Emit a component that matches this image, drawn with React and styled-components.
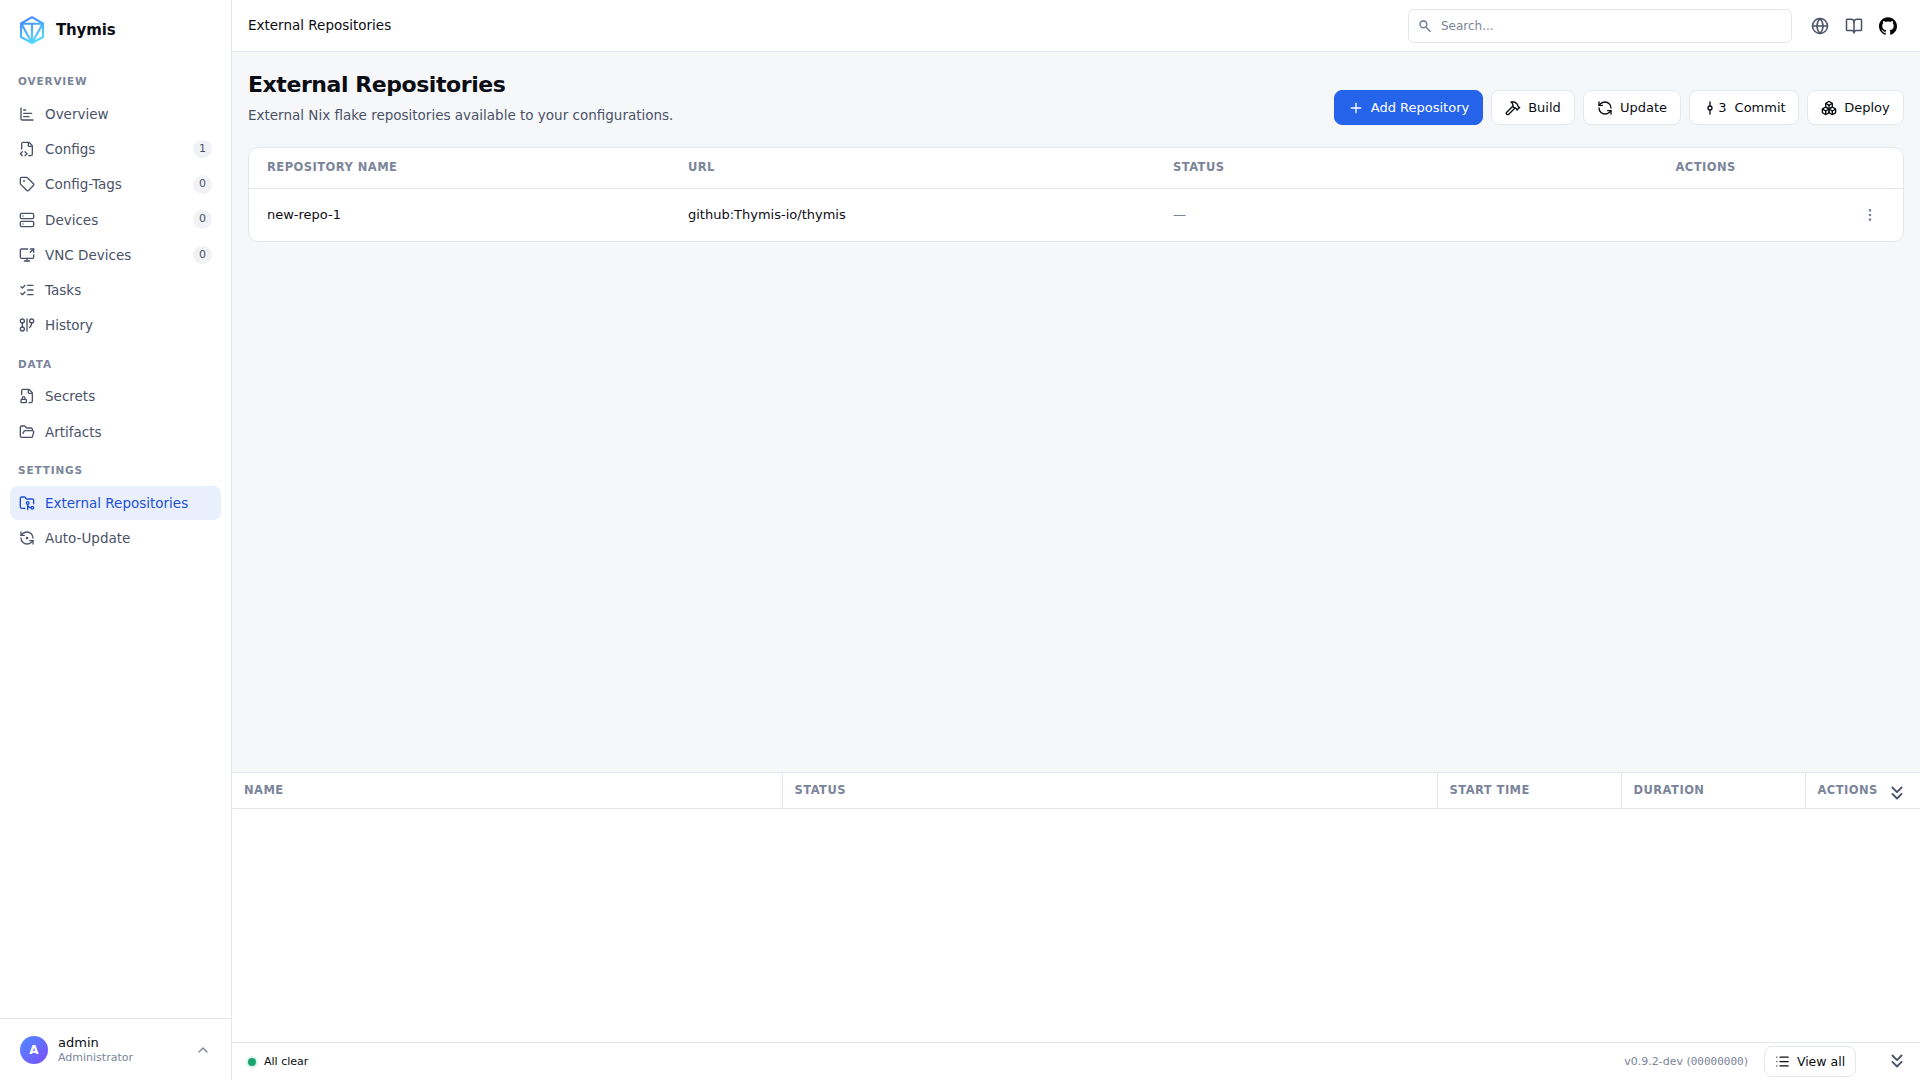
import React from 'react';
import styled, { createGlobalStyle } from 'styled-components';
import {
  ChartBar, FileCode2, Tag, Server, ScreenShare, ListChecks, GitGraph, FileLock2, FolderOpen,
  FolderGit2, RefreshCcwDot, Plus, Hammer, RefreshCcw, GitCommitVertical, Boxes, List, ChevronsDown,
  ChevronUp, Globe, BookOpen, EllipsisVertical,
} from 'lucide-react';

const Global = createGlobalStyle`
  *, *::before, *::after { box-sizing: border-box; }
  body { margin: 0; font-family: "DejaVu Sans", sans-serif; color: #0b0d14; background: #f5f7f9; }
  button { font-family: inherit; color: inherit; }
`;
const line = '#e4e7ee';
const muted = '#7b859a';
const slate = '#4a5268';

const Shell = styled.div`display: grid; grid-template-columns: 232px 1fr; width: 1920px; height: 1080px;`;
const Sidebar = styled.aside`background: #fff; border-right: 1px solid ${line}; display: flex; flex-direction: column; min-height: 0;`;
const Brand = styled.div`display: flex; align-items: center; gap: 10px; height: 58px; padding: 2px 18px 0; font-weight: 700; font-size: 15px; letter-spacing: -0.15px;`;
const Nav = styled.nav`flex: 1; padding: 0 10px; display: flex; flex-direction: column;`;
const Heading = styled.div`font-size: 10.5px; line-height: 16px; font-weight: 700; letter-spacing: 0.84px; color: ${muted}; padding-left: 8px; margin: ${(p) => p.$top}px 0 7.75px;`;
const Item = styled.a`
  display: flex; align-items: center; gap: 10px; height: 34.25px; margin-bottom: 1px; padding: 0 9px; border-radius: 8px;
  font-size: 13.5px; line-height: 20.25px; color: ${(p) => (p.$active ? '#1d4fd8' : slate)}; background: ${(p) => (p.$active ? '#e9effd' : 'transparent')};
  svg { width: 16px; height: 16px; flex: none; }
`;
const Count = styled.span`margin-left: auto; min-width: 19px; height: 18.5px; border-radius: 10px; background: #f1f2f6; font-size: 11px; line-height: 17px; text-align: center;`;
const User = styled.div`height: 62px; border-top: 1px solid ${line}; display: flex; align-items: center; gap: 10px; padding: 1px 20px 0; svg { margin-left: auto; color: ${muted}; }`;
const Avatar = styled.div`width: 28px; height: 28px; border-radius: 50%; background: linear-gradient(135deg, #4f8cff, #7c4dff); color: #fff; font-size: 12px; font-weight: 700; display: grid; place-items: center;`;
const UserName = styled.div`font-size: 13px; line-height: 15px; padding-bottom: 1px;`;
const UserRole = styled.div`font-size: 11px; line-height: 14px; color: ${muted};`;

const Main = styled.main`display: flex; flex-direction: column; min-width: 0;`;
const TopBar = styled.header`height: 52px; background: #fff; border-bottom: 1px solid ${line}; display: flex; align-items: center; padding: 0 23px 0 16px; font-size: 13.5px;`;
const Crumb = styled.span`flex: 1; padding-bottom: 1px;`;
const Search = styled.div`width: 384px; height: 34px; border: 1px solid ${line}; border-radius: 6px; display: flex; align-items: center; gap: 9px; padding: 0 9px; font-size: 12px; color: ${muted};`;
const TopIcons = styled.div`display: flex; gap: 16px; margin-left: 19px; color: ${slate}; svg { display: block; width: 18px; height: 18px; }`;

const Content = styled.section`flex: 1; padding: 16px 16px 0;`;
const PageHead = styled.div`display: flex; justify-content: space-between; height: 79px;`;
const Title = styled.h1`margin: 0; font-size: 22px; line-height: 33px; letter-spacing: -0.44px; font-weight: 700;`;
const Sub = styled.p`margin: 4px 0 0; font-size: 13.5px; line-height: 20px; color: ${slate};`;
const Actions = styled.div`display: flex; gap: 8px; padding-top: 22px;`;
const Button = styled.button`
  display: flex; align-items: center; justify-content: center; gap: ${(p) => p.$gap ?? 7}px; width: ${(p) => p.$w}px; height: ${(p) => p.$h ?? 35}px; padding: 0 0 ${(p) => p.$lift ?? 0}px;
  font-size: ${(p) => p.$size ?? 13}px; border-radius: 8px; white-space: nowrap;
  border: 1px solid ${(p) => (p.$primary ? '#2563eb' : line)}; background: ${(p) => (p.$primary ? '#2563eb' : '#fff')}; color: ${(p) => (p.$primary ? '#fff' : '#0b0d14')};
  svg { width: ${(p) => p.$icon ?? 16}px; height: ${(p) => p.$icon ?? 16}px; flex: none; }
`;
const CommitCount = styled.span`display: flex; align-items: center; margin-right: 1px;`;

const Card = styled.div`background: #fff; border: 1px solid ${line}; border-radius: 10px; overflow: hidden;`;
const RepoRow = styled.div`
  display: grid; grid-template-columns: 421px 485px 502.5px 1fr; align-items: center; padding: 0 0 1px 18px;
  height: ${(p) => (p.$head ? 41 : 52)}px; font-size: ${(p) => (p.$head ? 11.5 : 13)}px;
  ${(p) => p.$head && `font-weight: 700; letter-spacing: 0.46px; color: ${muted}; border-bottom: 1px solid ${line}; padding-bottom: 3px;`}
`;
const Dash = styled.span`color: ${muted};`;
const RowMenu = styled.span`justify-self: end; margin-right: 25px; padding-top: 1px; color: ${muted}; svg { display: block; }`;

const Tasks = styled.section`height: 270px; background: #fff; border-top: 1px solid ${line};`;
const TaskHead = styled.div`display: grid; grid-template-columns: 550px 655px 184px 184px 1fr; height: 36px; border-bottom: 1px solid ${line};`;
const TaskCell = styled.div`
  display: flex; align-items: center; justify-content: space-between; padding: 0 12px 1px 12px; font-size: 11.5px; font-weight: 700; letter-spacing: 0.46px; color: ${muted};
  & + & { border-left: 1px solid ${line}; padding-left: 11.5px; }
  svg { color: ${slate}; position: relative; top: 3px; }
`;
const Footer = styled.footer`height: 38px; background: #fff; border-top: 1px solid ${line}; display: flex; align-items: center; padding: 0 12px 0 16px; font-size: 11px;`;
const Dot = styled.i`width: 8px; height: 8px; border-radius: 50%; background: #18a46f; box-shadow: 0 0 0 2px #dcf3ea; margin-right: 8px;`;
const Version = styled.span`margin-left: auto; margin-right: 16px; padding-bottom: 1px; color: ${muted}; code { font-family: "DejaVu Sans Mono", monospace; font-size: 11px; }`;
const FootToggle = styled.span`margin-left: 30px; padding-bottom: 2px; color: ${slate}; svg { display: block; }`;

const Logo = () => (
  <svg width="28" height="28" viewBox="0 0 28 28" fill="none" stroke="url(#lg)" strokeWidth="2.1" strokeLinejoin="round">
    <defs><linearGradient id="lg" x1="6" y1="2" x2="18" y2="27" gradientUnits="userSpaceOnUse"><stop stopColor="#4285ff" /><stop offset="1" stopColor="#55dcff" /></linearGradient></defs>
    <path d="M14 1.200 25 7.500v13.500L14 27 3 21V7.500zM3 7.700h22M14 7.700V27M3.800 8.500 14 27 24.200 8.500" />
  </svg>
);
const GitHub = () => (
  <svg viewBox="0 0 24 24" fill="#000"><path d="M12 .297c-6.630 0-12 5.373-12 12 0 5.303 3.438 9.800 8.205 11.385.6.113.82-.258.82-.577 0-.285-.010-1.040-.015-2.040-3.338.724-4.042-1.610-4.042-1.610C4.422 18.070 3.633 17.700 3.633 17.700c-1.087-.744.084-.729.084-.729 1.205.084 1.838 1.236 1.838 1.236 1.070 1.835 2.809 1.305 3.495.998.108-.776.417-1.305.760-1.605-2.665-.300-5.466-1.332-5.466-5.930 0-1.310.465-2.380 1.235-3.220-.135-.303-.540-1.523.105-3.176 0 0 1.005-.322 3.300 1.230.960-.267 1.980-.399 3-.405 1.020.006 2.040.138 3 .405 2.280-1.552 3.285-1.230 3.285-1.230.645 1.653.240 2.873.120 3.176.765.840 1.230 1.910 1.230 3.220 0 4.610-2.805 5.625-5.475 5.920.420.360.810 1.096.810 2.220 0 1.606-.015 2.896-.015 3.286 0 .315.210.690.825.570C20.565 22.092 24 17.592 24 12.297c0-6.627-5.373-12-12-12" /></svg>
);
const SearchIcon = () => (
  <svg width="14" height="14" viewBox="0 0 14 14" fill="none" stroke="currentColor" strokeWidth="1.600" strokeLinecap="round"><circle cx="5.400" cy="5.300" r="3.400" /><path d="m8 8 4 4.200" /></svg>
);

const NAV = [
  { title: 'OVERVIEW', top: 15, items: [['Overview', ChartBar], ['Configs', FileCode2, 1], ['Config-Tags', Tag, 0], ['Devices', Server, 0], ['VNC Devices', ScreenShare, 0], ['Tasks', ListChecks], ['History', GitGraph]] },
  { title: 'DATA', top: 12, items: [['Secrets', FileLock2], ['Artifacts', FolderOpen]] },
  { title: 'SETTINGS', top: 12.25, items: [['External Repositories', FolderGit2], ['Auto-Update', RefreshCcwDot]] },
];

export default function App() {
  return (
    <Shell>
      <Global />
      <Sidebar>
        <Brand><Logo />Thymis</Brand>
        <Nav>
          {NAV.map((g) => (
            <React.Fragment key={g.title}>
              <Heading $top={g.top}>{g.title}</Heading>
              {g.items.map(([label, Icon, n]) => (
                <Item key={label} $active={label === 'External Repositories'}><Icon />{label}{n !== undefined && <Count>{n}</Count>}</Item>
              ))}
            </React.Fragment>
          ))}
        </Nav>
        <User><Avatar>A</Avatar><div><UserName>admin</UserName><UserRole>Administrator</UserRole></div><ChevronUp size={16} /></User>
      </Sidebar>
      <Main>
        <TopBar>
          <Crumb>External Repositories</Crumb>
          <Search><SearchIcon />Search...</Search>
          <TopIcons><Globe /><BookOpen /><GitHub /></TopIcons>
        </TopBar>
        <Content>
          <PageHead>
            <div><Title>External Repositories</Title><Sub>External Nix flake repositories available to your configurations.</Sub></div>
            <Actions>
              <Button $primary $w={149}><Plus />Add Repository</Button>
              <Button $w={84}><Hammer />Build</Button>
              <Button $w={98}><RefreshCcw />Update</Button>
              <Button $w={110}><CommitCount><GitCommitVertical />3</CommitCount>Commit</Button>
              <Button $w={97}><Boxes />Deploy</Button>
            </Actions>
          </PageHead>
          <Card>
            <RepoRow $head><span>REPOSITORY NAME</span><span>URL</span><span>STATUS</span><span>ACTIONS</span></RepoRow>
            <RepoRow><span>new-repo-1</span><span>github:Thymis-io/thymis</span><Dash>—</Dash><RowMenu><EllipsisVertical size={16} /></RowMenu></RepoRow>
          </Card>
        </Content>
        <Tasks>
          <TaskHead>
            <TaskCell>NAME</TaskCell><TaskCell>STATUS</TaskCell><TaskCell>START TIME</TaskCell><TaskCell>DURATION</TaskCell><TaskCell>ACTIONS<ChevronsDown size={22} /></TaskCell>
          </TaskHead>
        </Tasks>
        <Footer>
          <Dot />All clear
          <Version>v0.9.2-dev (<code>00000000</code>)</Version>
          <Button $w={92} $h={31} $size={12.5} $icon={15} $lift={1}><List />View all</Button>
          <FootToggle><ChevronsDown size={22} /></FootToggle>
        </Footer>
      </Main>
    </Shell>
  );
}
